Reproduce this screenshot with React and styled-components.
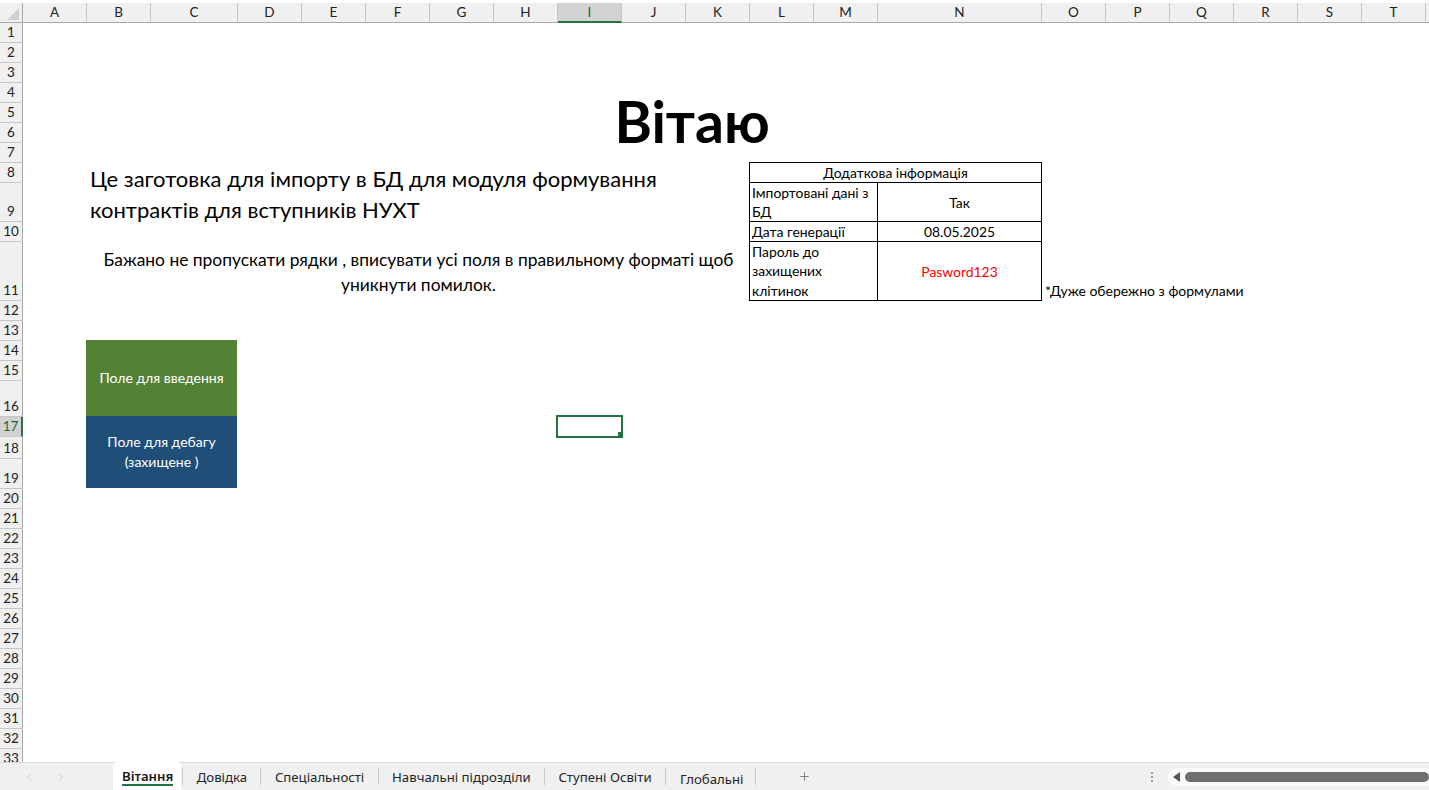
import React from 'react';
import styled, { createGlobalStyle } from 'styled-components';
import { ChevronLeft, ChevronRight, Plus } from 'lucide-react';

const GlobalStyle = createGlobalStyle`
  html, body { margin: 0; padding: 0; background: #fff; overflow: hidden; }
  body { font-family: Lato, "Liberation Sans", sans-serif; color: #000; }
  * { box-sizing: border-box; }
`;

const COLS = [
  ['A', 64], ['B', 64], ['C', 87], ['D', 64], ['E', 64], ['F', 64], ['G', 64],
  ['H', 64], ['I', 64], ['J', 64], ['K', 64], ['L', 64], ['M', 64], ['N', 164],
  ['O', 64], ['P', 64], ['Q', 64], ['R', 64], ['S', 64], ['T', 64], ['U', 64],
];
const ROWS = [
  20, 20, 20, 20, 20, 20, 20, 20, 39, 20, 59, 20, 20, 20, 20, 36, 20, 22, 30,
  20, 20, 20, 20, 20, 20, 20, 20, 20, 20, 20, 20, 20, 20,
];
const SELECTED_COL = 'I';
const SELECTED_ROW = 17;
const VISIBLE_LABEL_LIMIT = 20; // column U lies beyond the window edge

const Window = styled.div`
  width: 1429px;
  height: 790px;
  display: flex;
  flex-direction: column;
  overflow: hidden;
  background: #fff;
`;

const Sheet = styled.div`
  flex: 1;
  min-height: 0;
  overflow: hidden;
  padding-top: 3px;
  display: grid;
  grid-template-columns: 23px ${COLS.map(([, w]) => `${w}px`).join(' ')};
  grid-template-rows: 20px ${ROWS.map((h) => `${h}px`).join(' ')};
  align-content: start;
  justify-content: start;
`;

const Corner = styled.div`
  grid-column: 1;
  grid-row: 1;
  background: #f0f0f0;
  border-right: 1px solid #a9a9a9;
  border-bottom: 1px solid #a9a9a9;
  display: flex;
  align-items: flex-end;
  justify-content: flex-end;
  padding: 0 3px 2px 0;
`;

const ColHeader = styled.div`
  grid-row: 1;
  grid-column: ${(p) => p.$col};
  background: ${(p) => (p.$selected ? '#d2d2d2' : '#f0f0f0')};
  border-right: 1px solid #c6c6c6;
  border-bottom: ${(p) => (p.$selected ? '2px solid #217346' : '1px solid #a9a9a9')};
  color: ${(p) => (p.$selected ? '#1d6a40' : '#222')};
  display: flex;
  align-items: center;
  justify-content: center;
  font-size: 13.5px;
  line-height: 19px;
  overflow: hidden;
`;

const RowHeader = styled.div`
  grid-column: 1;
  grid-row: ${(p) => p.$row};
  background: ${(p) => (p.$selected ? '#d2d2d2' : '#f0f0f0')};
  border-right: ${(p) => (p.$selected ? '2px solid #217346' : '1px solid #a9a9a9')};
  border-bottom: 1px solid #c6c6c6;
  color: ${(p) => (p.$selected ? '#1d6a40' : '#222')};
  display: flex;
  align-items: flex-end;
  justify-content: center;
  font-size: 13.5px;
  line-height: 19px;
  overflow: hidden;
`;

const Title = styled.div`
  grid-column: 9 / 15;
  grid-row: 5 / 9;
  align-self: end;
  text-align: center;
  padding: 0 0 8px 12px;
  font-weight: 700;
  font-size: 57px;
  line-height: 1.2;
  white-space: nowrap;
`;

const Intro = styled.div`
  grid-column: 3 / 13;
  grid-row: 9 / 11;
  padding: 0 0 0 3px;
  font-size: 22px;
  line-height: 31px;
  white-space: nowrap;
`;

const Notice = styled.div`
  grid-column: 3 / 13;
  grid-row: 12;
  align-self: center;
  text-align: center;
  font-size: 17.4px;
  line-height: 25px;
  white-space: nowrap;
`;

const InfoTable = styled.div`
  grid-column: 13 / 16;
  grid-row: 9 / 13;
  align-self: start;
  justify-self: start;
  margin: -1px 0 0 -1px;
  display: grid;
  grid-template-columns: 128px 164px;
  grid-template-rows: 20px 39px 20px 59px;
  border-top: 1px solid #000;
  border-left: 1px solid #000;
  font-size: 13.9px;
`;

const TableCell = styled.div`
  grid-column: ${(p) => (p.$span ? '1 / 3' : 'auto')};
  border-right: 1px solid #000;
  border-bottom: 1px solid #000;
  display: flex;
  align-items: ${(p) => p.$valign || 'center'};
  justify-content: ${(p) => (p.$center ? 'center' : 'flex-start')};
  text-align: ${(p) => (p.$center ? 'center' : 'left')};
  padding: 0 2px;
  line-height: ${(p) => p.$lh || '19px'};
  color: ${(p) => p.$color || '#000'};
  white-space: nowrap;
`;

const Note = styled.div`
  grid-column: 16 / 22;
  grid-row: 12;
  align-self: end;
  padding: 0 0 1px 3px;
  font-size: 14px;
  line-height: 19px;
  white-space: nowrap;
`;

const ColorBlock = styled.div`
  grid-column: 3 / 5;
  grid-row: ${(p) => p.$rows};
  margin: -1px 1px 1px -1px;
  background: ${(p) => p.$bg};
  color: #fff;
  display: flex;
  align-items: center;
  justify-content: center;
  text-align: center;
  font-size: 14px;
  line-height: 20px;
`;

const ActiveCell = styled.div`
  grid-column: 10;
  grid-row: 18;
  position: relative;
`;

const SelectionFrame = styled.div`
  position: absolute;
  top: -2px;
  left: -2px;
  right: -1px;
  bottom: -1px;
  border: 2px solid #217346;
  z-index: 2;
`;

const FillHandle = styled.div`
  position: absolute;
  right: -1px;
  bottom: -1px;
  width: 5px;
  height: 6px;
  background: #217346;
  z-index: 3;
`;

const TabBar = styled.div`
  height: 28px;
  flex: none;
  display: flex;
  align-items: stretch;
  background: #f0f0f0;
  border-top: 1px solid #dadada;
  font-family: "Noto Sans", "Open Sans", sans-serif;
  font-size: 13.2px;
  color: #262626;
`;

const NavButtons = styled.div`
  width: 113px;
  flex: none;
  display: flex;
  align-items: center;
  padding-left: 23px;
  gap: 20px;
  color: #b9b9b9;
`;

const Tab = styled.div`
  display: flex;
  align-items: center;
  padding: ${(p) => (p.$active ? '0 8px 0 9px' : p.$drop ? '5px 11px 0 14px' : '0 13.4px')};
  margin-top: ${(p) => (p.$active ? '-1px' : '0')};
  margin-right: ${(p) => (p.$active ? '1px' : '0')};
  background: ${(p) => (p.$active ? '#fff' : 'transparent')};
  border-radius: ${(p) => (p.$active ? '4px 4px 0 0' : '0')};
  font-weight: ${(p) => (p.$active ? 600 : 400)};
  color: ${(p) => (p.$active ? '#1a1a1a' : '#262626')};
  white-space: nowrap;
  position: relative;

  &::after {
    content: '';
    display: ${(p) => (p.$active ? 'block' : 'none')};
    position: absolute;
    left: 9px;
    right: 8px;
    bottom: 4px;
    height: 2px;
    background: #217346;
  }
`;

const Separator = styled.div`
  width: 1px;
  height: 17px;
  align-self: center;
  background: #c9c9c9;
  flex: none;
`;

const AddSheet = styled.div`
  display: flex;
  align-items: center;
  margin-left: 42px;
  color: #555;
`;

const RightArea = styled.div`
  margin-left: auto;
  display: flex;
  align-items: center;
  gap: 14px;
`;

const Dots = styled.div`
  display: flex;
  flex-direction: column;
  gap: 2px;
  width: 3px;

  span {
    width: 2px;
    height: 2px;
    background: #9d9d9d;
  }
`;

const ScrollTrack = styled.div`
  width: 261px;
  height: 18px;
  background: #f9f9f9;
  border-radius: 9px 0 0 9px;
  display: flex;
  align-items: center;
  padding-left: 5px;
  gap: 5px;
`;

const ScrollThumb = styled.div`
  flex: 1;
  height: 10px;
  border-radius: 5px;
  background: #6f6f6f;
`;

const TABS = ['Вітання', 'Довідка', 'Спеціальності', 'Навчальні підрозділи', 'Ступені Освіти', 'Глобальні'];

export default function App() {
  return (
    <>
      <GlobalStyle />
      <Window>
        <Sheet>
          <Corner>
            <svg width="12" height="12" viewBox="0 0 12 12">
              <polygon points="12,0 12,12 0,12" fill="#d0d0d0" />
            </svg>
          </Corner>
          {COLS.map(([name], i) => (
            <ColHeader key={name} $col={i + 2} $selected={name === SELECTED_COL}>
              {i < VISIBLE_LABEL_LIMIT ? name : null}
            </ColHeader>
          ))}
          {ROWS.map((_, i) => (
            <RowHeader key={i} $row={i + 2} $selected={i + 1 === SELECTED_ROW}>
              {i + 1}
            </RowHeader>
          ))}

          <Title>Вітаю</Title>

          <Intro>
            Це заготовка для імпорту в БД для модуля формування
            <br />
            контрактів для вступників НУХТ
          </Intro>

          <Notice>
            Бажано не пропускати рядки , вписувати усі поля в правильному форматі щоб
            <br />
            уникнути помилок.
          </Notice>

          <InfoTable>
            <TableCell $span $center>Додаткова інформація</TableCell>
            <TableCell $valign="flex-start">
              Імпортовані дані з
              <br />
              БД
            </TableCell>
            <TableCell $center>Так</TableCell>
            <TableCell>Дата генерації</TableCell>
            <TableCell $center>08.05.2025</TableCell>
            <TableCell $valign="flex-end" $lh="19.5px">
              Пароль до
              <br />
              захищених
              <br />
              клітинок
            </TableCell>
            <TableCell $center $color="#ff0000">Pasword123</TableCell>
          </InfoTable>

          <Note>*Дуже обережно з формулами</Note>

          <ColorBlock $rows="15 / 18" $bg="#548235">Поле для введення</ColorBlock>
          <ColorBlock $rows="18 / 21" $bg="#1f4e79">
            Поле для дебагу
            <br />
            (захищене )
          </ColorBlock>

          <ActiveCell>
            <SelectionFrame />
            <FillHandle />
          </ActiveCell>
        </Sheet>

        <TabBar>
          <NavButtons>
            <ChevronLeft size={12} strokeWidth={1.5} />
            <ChevronRight size={12} strokeWidth={1.5} />
          </NavButtons>
          {TABS.map((t, i) => (
            <React.Fragment key={t}>
              <Tab $active={i === 0} $drop={t === 'Глобальні'}>{t}</Tab>
              <Separator />
            </React.Fragment>
          ))}
          <AddSheet>
            <Plus size={13} strokeWidth={1.3} />
          </AddSheet>
          <RightArea>
            <Dots>
              <span />
              <span />
              <span />
            </Dots>
            <ScrollTrack>
              <svg width="7" height="10" viewBox="0 0 7 10">
                <polygon points="7,0 7,10 0,5" fill="#555" />
              </svg>
              <ScrollThumb />
            </ScrollTrack>
          </RightArea>
        </TabBar>
      </Window>
    </>
  );
}
